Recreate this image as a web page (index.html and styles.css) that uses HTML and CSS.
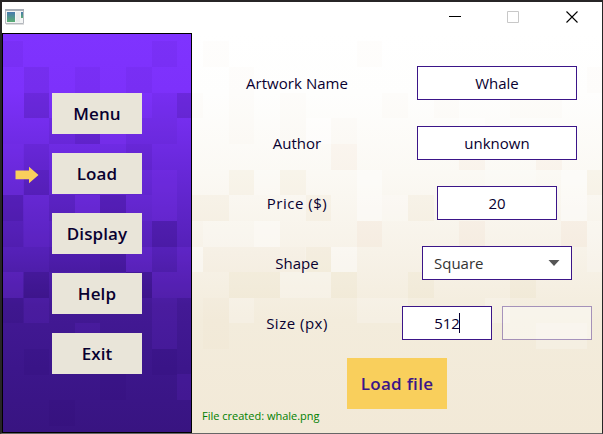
FILE: index.html
```html
<!DOCTYPE html>
<html lang="en">
<head>
<meta charset="utf-8">
<title>Artwork loader</title>
<link rel="stylesheet" href="styles.css">
</head>
<body>
<div class="window">
  <header class="titlebar">
    <svg class="app-icon" width="20" height="17" viewBox="0 0 20 17">
      <defs><linearGradient id="ai" x2="0" y2="1"><stop stop-color="#4779ae"/><stop offset="1" stop-color="#5aad72"/></linearGradient></defs>
      <path d="M.5.5h18v14H.5z" fill="#f4f5f5" stroke="#b5b9bf"/>
      <path d="M0 0h19v2H0z" fill="#a9afb8"/>
      <path d="M2 3h8v10H2z" fill="url(#ai)"/>
      <path d="M11 3h4v10h-4z" fill="#e9ebeb"/>
      <path d="M16 3h2v6h-2z" fill="url(#ai)"/>
      <path d="M1 15.5h18" stroke="#dedede"/>
    </svg>
    <svg class="controls" width="130" height="12" viewBox="0 0 130 12" fill="none">
      <path d="M0 5.5h12" stroke="#000"/>
      <path d="M58.5.5h11v11h-11z" stroke="#c8c8c8"/>
      <path d="M117.500.5l11 11m0-11l-11 11" stroke="#000" stroke-width="1.1"/>
    </svg>
  </header>
  <div class="content">
    <nav class="sidebar">
      <svg class="mosaic" width="188" height="398" viewBox="3 34 188 398" shape-rendering="crispEdges">
        <g fill="#180050">
          <path opacity=".045" d="M3 41h20v26H3zM152 41h25v26h-25zM75 67h25v26H75zM126 67h26v26h-26zM152 93h25v25h-25zM126 118h51v26h-51z"/>
          <path opacity=".08" d="M24 67h25v26H24zM49 118h26v26H49zM24 144h25v26H24zM126 144h26v26h-26zM49 195h26v26H49zM3 221h20v26H3zM49 247h51v25H49zM3 298h20v25H3z"/>
          <path opacity=".05" d="M100 374h26v26h-26zM24 349h25v26H24zM152 349h25v26h-25zM49 400h26v26H49z"/>
          <path opacity=".17" d="M24 93h25v25H24zM177 93h14v25h-14zM75 118h25v26H75zM24 170h25v25H24zM3 195h20v26H3zM100 195h26v26h-26zM152 221h25v26h-25zM100 247h26v25h-26zM24 272h25v26H24zM126 272h26v26h-26z"/>
        </g>
        <g fill="#8c38ff">
          <path opacity=".1" d="M3 144h20v51H3zM24 195h25v26H24zM126 195h26v26h-26zM24 221h25v26H24zM24 298h25v25H24zM75 323h25v26H75zM152 298h25v51h-25zM177 374h14v26h-14z"/>
          <path opacity=".18" d="M100 118h26v26h-26zM152 170h25v51h-25zM75 195h25v26H75zM126 247h26v25h-26zM177 247h14v51h-14zM3 272h20v26H3zM152 272h25v26h-25z"/>
        </g>
      </svg>
      <svg class="pointer" width="24" height="18" viewBox="0 0 24 18"><path d="M.5 4.500H14V.7L23.500 9 14 17.300v-4.100H.5z" fill="#f9cf5c"/></svg>
      <button class="nav-button">Menu</button>
      <button class="nav-button">Load</button>
      <button class="nav-button">Display</button>
      <button class="nav-button">Help</button>
      <button class="nav-button">Exit</button>
    </nav>
    <main class="panel">
      <svg class="mosaic" width="410" height="400" viewBox="192 33 410 400" shape-rendering="crispEdges">
        <g fill="#d8bf76">
          <path opacity=".025" d="M203 41h26v26h-26zM357 41h25v26h-25zM229 67h25v51h-25zM192 93h11v25h-11zM280 93h26v51h-26zM382 93h26v25h-26zM434 93h25v25h-25zM587 67h15v26h-15zM510 93h52v25h-52zM229 118h25v26h-25zM331 118h26v26h-26zM203 247h102v25h-102zM203 298h26v51h-26z"/>
          <path opacity=".07" d="M229 170h25v25h-25zM280 170h26v25h-26zM192 195h37v26h-37zM306 195h25v26h-25zM408 195h26v26h-26zM306 247h25v25h-25zM587 170h15v25h-15zM229 272h51v26h-51zM331 272h26v26h-26zM408 272h26v26h-26zM510 272h26v26h-26z"/>
        </g>
        <g fill="#e4b384">
          <path opacity=".075" d="M331 144h26v26h-26zM459 144h26v26h-26zM536 144h26v26h-26zM357 221h25v26h-25zM459 221h26v26h-26zM561 221h26v26h-26z"/>
        </g>
        <g fill="#fff">
          <path opacity=".2" d="M254 170h26v25h-26zM203 221h51v26h-51zM485 170h51v25h-51zM382 195h26v26h-26zM587 221h15v51h-15zM280 272h51v26h-51zM229 298h25v25h-25zM357 298h51v25h-51zM485 298h25v25h-25zM536 323h51v26h-51z"/>
          <path opacity=".4" d="M306 118h25v26h-25zM459 118h26v26h-26zM254 221h26v26h-26zM357 170h25v51h-25zM561 170h26v51h-26zM331 247h26v25h-26zM192 247h11v25h-11z"/>
        </g>
      </svg>
      <form class="form">
        <div class="row"><label class="label name">Artwork Name</label><div class="control"><div class="field wide">Whale</div></div></div>
        <div class="row"><label class="label">Author</label><div class="control"><div class="field wide">unknown</div></div></div>
        <div class="row"><label class="label price">Price ($)</label><div class="control"><div class="field medium">20</div></div></div>
        <div class="row"><label class="label">Shape</label><div class="control"><div class="field select"><span>Square</span><svg width="12" height="6" viewBox="0 0 12 6"><path d="M.5 0h11L6 6z" fill="#555"/></svg></div></div></div>
        <div class="row"><label class="label price">Size (px)</label><div class="control"><div class="field small">512<i class="caret"></i></div><div class="field small disabled"></div></div></div>
      </form>
      <button class="load-button">Load file</button>
      <p class="status">File created: whale.png</p>
    </main>
  </div>
</div>
</body>
</html>
```

FILE: styles.css
```css
* { box-sizing: border-box; }
body {
  margin: 0;
  font-family: "Trebuchet MS", "Open Sans", sans-serif;
  font-size: 15px;
  color: #080030;
}
.window {
  width: 603px;
  height: 434px;
  display: flex;
  flex-direction: column;
  background: #fff;
  border: 2px solid #272526;
  border-right-width: 1px;
  border-bottom: 1px solid #666;
}
.titlebar {
  height: 31px;
  flex: none;
  display: flex;
  justify-content: space-between;
  padding: 7px 23px 0 3px;
}
.controls { margin-top: 2px; }
.content { flex: 1; display: flex; }
.sidebar {
  position: relative;
  width: 190px;
  height: 400px;
  border: 1px solid #000;
  background: linear-gradient(#7f33ff 0, #7d31fb 14%, #6828d9 34%, #5420b6 55%, #431995 68%, #3c168b 84%, #381481 100%);
  display: flex;
  flex-direction: column;
  align-items: center;
  gap: 19px;
  padding-top: 59px;
}
.mosaic { position: absolute; left: 0; top: 0; }
.pointer { position: absolute; left: 12px; top: 132px; }
button { font: inherit; border: 0; padding: 0; border-radius: 0; }
.nav-button {
  position: relative;
  width: 90px;
  height: 41px;
  background: #e9e5d9;
  color: #080030;
  font-size: 17px;
  font-weight: 600;
  letter-spacing: .1px;
}
.panel {
  position: relative;
  width: 410px;
  height: 400px;
  background: linear-gradient(#fff 0, #fefefd 15%, #fbf9f4 35%, #f7f2e8 55%, #f3ecdc 72%, #f2e9d7 100%);
  display: flex;
  flex-direction: column;
  padding-top: 33px;
}
.form { position: relative; display: flex; flex-direction: column; gap: 26px; }
.row { display: flex; height: 34px; align-items: center; }
.label { width: 210px; text-align: center; white-space: nowrap; }
.name { letter-spacing: .05px; }
.price { letter-spacing: .5px; }
.control { width: 190px; display: flex; justify-content: center; gap: 10px; }
.field {
  height: 34px;
  flex: none;
  display: flex;
  align-items: center;
  justify-content: center;
  background: #fff;
  border: 1px solid #3b1588;
}
.wide { width: 160px; }
.medium { width: 120px; }
.small { width: 90px; }
.select { width: 150px; justify-content: space-between; padding: 0 11px; color: #333; }
.disabled { opacity: .42; }
.caret { width: 1px; height: 20px; margin: 0 0 0 -1px; background: #080030; }
.load-button {
  position: relative;
  align-self: center;
  width: 100px;
  height: 51px;
  margin-top: 18px;
  background: #f9cf5c;
  color: #3b1588;
  font-size: 17px;
  font-weight: 600;
  letter-spacing: .3px;
}
.status { position: relative; margin: -1px 0 0 10px; font-size: 11px; line-height: 16px; color: #008000; }
```
